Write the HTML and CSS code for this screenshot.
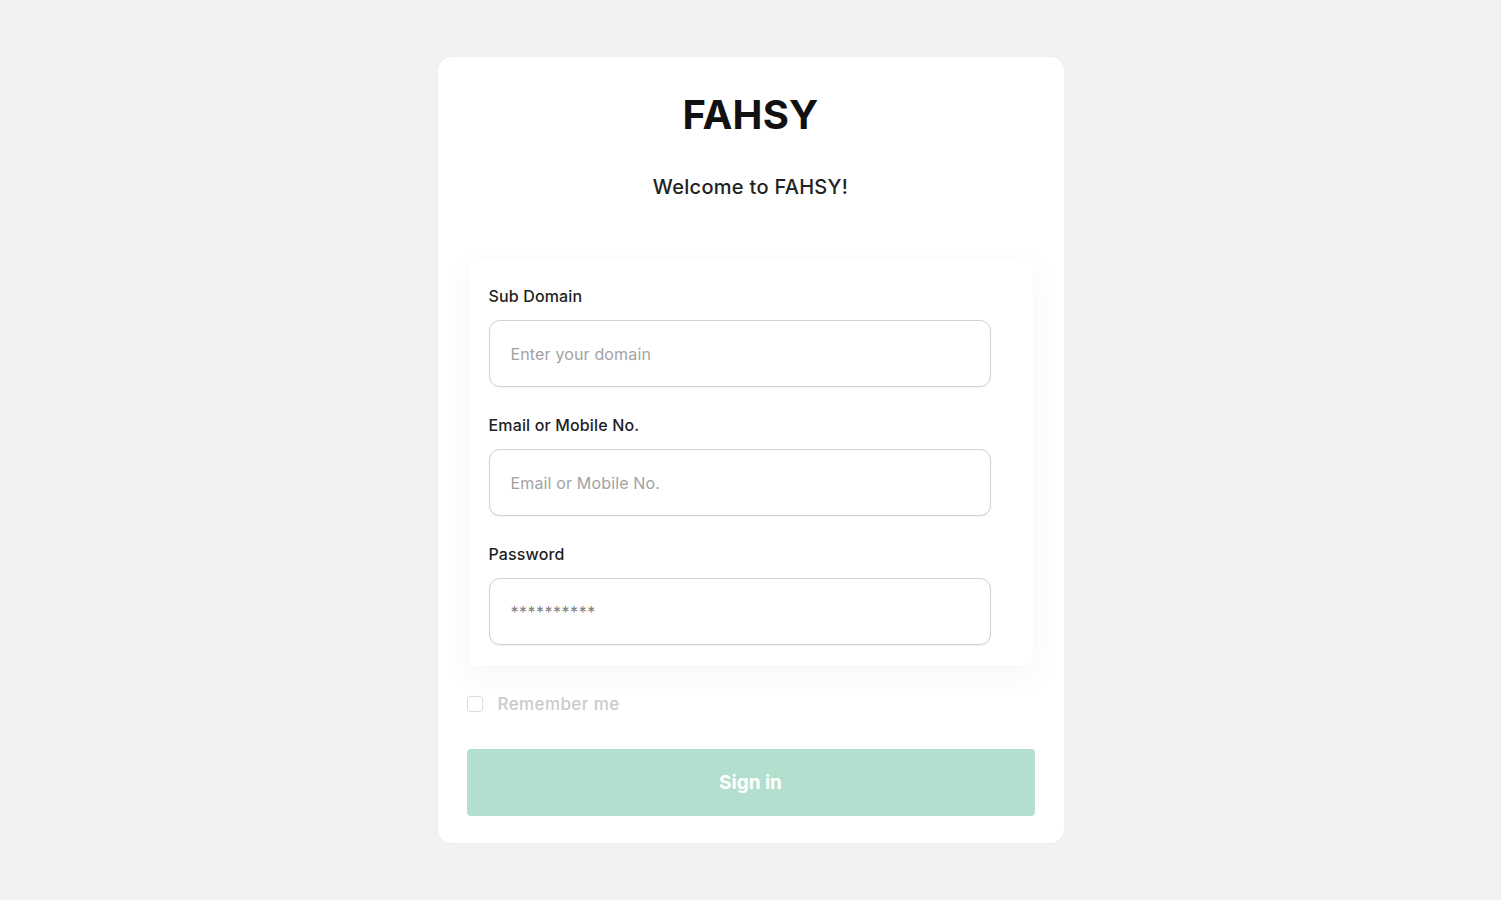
FILE: index.html
```html
<!DOCTYPE html>
<html lang="en">
<head>
<meta charset="utf-8">
<title>FAHSY - Sign in</title>
<link rel="stylesheet" href="styles.css">
</head>
<body>
<main class="card">
  <h1 class="brand">FAHSY</h1>
  <p class="welcome">Welcome to FAHSY!</p>
  <form class="form">
    <div class="panel">
      <label class="field">
        <span class="label">Sub Domain</span>
        <input class="input" type="text" placeholder="Enter your domain">
      </label>
      <label class="field">
        <span class="label">Email or Mobile No.</span>
        <input class="input" type="text" placeholder="Email or Mobile No.">
      </label>
      <label class="field last">
        <span class="label">Password</span>
        <input class="input pw" type="password" placeholder="**********">
      </label>
    </div>
    <label class="remember">
      <span class="box"></span>
      <span class="remember-text">Remember me</span>
    </label>
    <button class="signin" type="button">Sign in</button>
  </form>
</main>
</body>
</html>
```
FILE: styles.css
```css
* { box-sizing: border-box; }
html, body { margin: 0; padding: 0; }
body {
  background: #f2f2f2;
  font-family: Inter, "Noto Sans", "Liberation Sans", sans-serif;
  min-height: 100vh;
  display: flex;
  align-items: center;
  justify-content: center;
}
.card {
  width: 626px;
  height: 786px;
  background: #ffffff;
  border-radius: 14px;
  padding: 34px 29px 28px;
  display: flex;
  flex-direction: column;
  align-items: stretch;
  box-shadow: 0 0 3px rgba(0,0,0,0.03);
}
.brand {
  margin: 0;
  text-align: center;
  font-size: 40px;
  line-height: 48px;
  font-weight: 700;
  color: #111;
  letter-spacing: 0.2px;
}
.welcome {
  margin: 36px 0 0;
  text-align: center;
  font-size: 20px;
  line-height: 24px;
  font-weight: 500;
  color: #222;
  letter-spacing: 0.3px;
}
.form {
  margin-top: 62px;
  display: flex;
  flex-direction: column;
}
.panel {
  margin: 0 2px;
  background: #fff;
  border-radius: 6px;
  padding: 25px 20px 21px;
  box-shadow: 0 8px 30px rgba(80,70,40,0.05), 0 0 2px rgba(0,0,0,0.03);
  display: flex;
  flex-direction: column;
}
.field {
  display: flex;
  flex-direction: column;
  margin-bottom: 28px;
}
.field.last { margin-bottom: 0; }
.label {
  font-size: 16px;
  line-height: 20px;
  font-weight: 500;
  color: #1e1e1e;
  margin-bottom: 14px;
  letter-spacing: 0.15px;
}
.input {
  width: 502px;
  height: 67px;
  border: 1.5px solid #d2d2d2;
  border-radius: 11px;
  padding: 0 21px;
  font-family: inherit;
  font-size: 16px;
  color: #333;
  background: #fff;
  box-shadow: 0 1px 2px rgba(0,0,0,0.06);
  outline: none;
  letter-spacing: 0.15px;
}
.input::placeholder { color: #a2a2a2; }
.input.pw::placeholder { color: #808080; letter-spacing: 0.5px; }
.remember {
  margin-top: 30px;
  display: flex;
  align-items: center;
  gap: 15px;
  height: 16px;
}
.box {
  width: 16px;
  height: 16px;
  border: 1.5px solid #dedede;
  border-radius: 3px;
  background: #fff;
}
.remember-text {
  font-size: 17px;
  line-height: 20px;
  font-weight: 500;
  color: #cbcbcb;
  letter-spacing: 0.4px;
}
.signin {
  margin-top: 37px;
  height: 67px;
  width: 100%;
  border: none;
  border-radius: 4px;
  background: #b3dfcf;
  color: #ffffff;
  font-family: inherit;
  font-size: 19px;
  font-weight: 700;
}
```
